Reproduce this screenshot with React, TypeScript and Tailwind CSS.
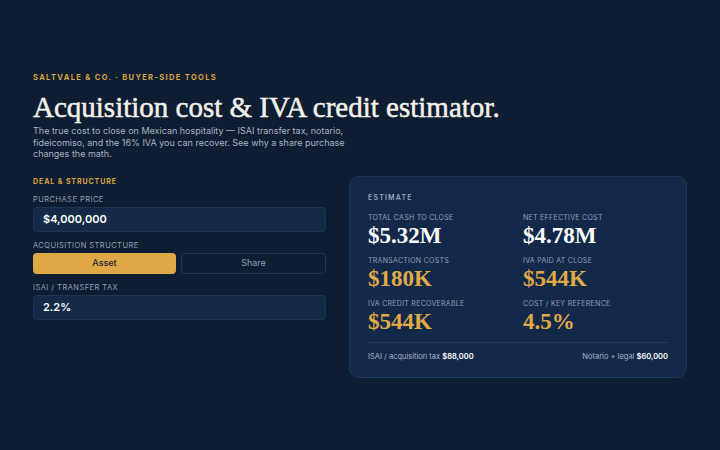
import React from "react";

const serif = { fontFamily: '"Liberation Serif", "DejaVu Serif", serif' };

function Label({ children }: { children: React.ReactNode }) {
  return <div className="text-[7.5px] uppercase leading-[9px] tracking-[0.06em] text-[#8fa0b5]">{children}</div>;
}

function Field({ label, value }: { label: string; value: string }) {
  return (
    <div className="flex flex-col gap-[3px]">
      <Label>{label}</Label>
      <div className="flex h-[25px] items-center rounded-[4px] border border-[#1d3654] bg-[#142b47] px-[9px] text-[11px] font-semibold text-white">
        {value}
      </div>
    </div>
  );
}

function Stat({ label, value, gold }: { label: string; value: string; gold?: boolean }) {
  return (
    <div className="flex flex-col">
      <div className="text-[7px] uppercase leading-[9px] tracking-[0.04em] text-[#8fa0b5]">{label}</div>
      <div
        className={`mt-[2px] text-[23px] font-bold leading-[24px] ${gold ? "text-[#e0aa45]" : "text-white"}`}
        style={serif}
      >
        {value}
      </div>
    </div>
  );
}

export default function App() {
  return (
    <div
      className="min-h-[450px] w-full bg-[#0e1d31] px-[33px] pt-[73px] text-white"
      style={{ fontFamily: 'Inter, "Noto Sans", sans-serif' }}
    >
      <div className="text-[7.5px] font-bold uppercase leading-[9px] tracking-[0.18em] text-[#d9a443]">
        Saltvale &amp; Co. · Buyer-side tools
      </div>
      <h1
        className="mt-[8px] text-[29px] leading-[34px] text-[#f3f1ea] [-webkit-text-stroke:0.5px_#f3f1ea]"
        style={serif}
      >
        Acquisition cost &amp; IVA credit estimator.
      </h1>
      <p className="mt-[1px] w-[322px] text-[9px] leading-[11.5px] text-[#a8b4c4]">
        The true cost to close on Mexican hospitality — ISAI transfer tax, notario, fideicomiso, and the 16% IVA you can
        recover. See why a share purchase changes the math.
      </p>

      <div className="mt-[16px] flex gap-[23px]">
        <div className="flex w-[293px] flex-col pt-[1px]">
          <div className="text-[7px] font-bold uppercase leading-[9px] tracking-[0.13em] text-[#d9a443]">
            Deal &amp; Structure
          </div>
          <div className="mt-[9px] flex flex-col gap-[9px]">
            <Field label="Purchase price" value="$4,000,000" />
            <div className="flex flex-col gap-[3px]">
              <Label>Acquisition structure</Label>
              <div className="flex gap-[5px]">
                <div className="flex h-[21px] flex-1 items-center justify-center rounded-[4px] bg-[#dfa846] text-[9px] font-medium text-[#1a2230]">
                  Asset
                </div>
                <div className="flex h-[21px] flex-1 items-center justify-center rounded-[4px] border border-[#1f3756] text-[9px] text-[#8f9db0]">
                  Share
                </div>
              </div>
            </div>
            <Field label="ISAI / transfer tax" value="2.2%" />
          </div>
        </div>

        <div className="w-[338px] rounded-[10px] border border-[#1e3858] bg-[#13294a] px-[18px] pb-[15px] pt-[16px]">
          <div className="text-[7px] font-semibold uppercase leading-[9px] tracking-[0.17em] text-[#9aa8ba]">
            Estimate
          </div>
          <div className="mt-[11px] grid grid-cols-2 gap-x-[10px] gap-y-[8px]">
            <Stat label="Total cash to close" value="$5.32M" />
            <Stat label="Net effective cost" value="$4.78M" />
            <Stat label="Transaction costs" value="$180K" gold />
            <Stat label="IVA paid at close" value="$544K" gold />
            <Stat label="IVA credit recoverable" value="$544K" gold />
            <Stat label="Cost / key reference" value="4.5%" gold />
          </div>
          <div className="mt-[8px] flex items-center justify-between border-t border-[#213c5c] pt-[9px] text-[7.5px] leading-[10px] text-[#a8b4c4]">
            <span>
              ISAI / acquisition tax <b className="font-semibold text-white">$88,000</b>
            </span>
            <span>
              Notario + legal <b className="font-semibold text-white">$60,000</b>
            </span>
          </div>
        </div>
      </div>
    </div>
  );
}
